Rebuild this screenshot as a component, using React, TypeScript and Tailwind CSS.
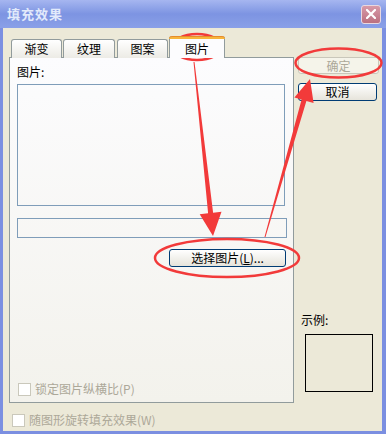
import React from "react";

const tabs = [
  { name: "渐变", w: "w-[51px]", ml: "ml-[2px]" },
  { name: "纹理", w: "w-[52px]", ml: "ml-[1px]" },
  { name: "图案", w: "w-[51px]", ml: "ml-[2px]" },
];

function Checkbox({ label }: { label: React.ReactNode }) {
  return (
    <div className="flex items-center">
      <div className="w-[13px] h-[13px] border border-[#cac8bb] bg-white" />
      <span className="ml-[4px] text-[12px] leading-[14px] text-[#aca899]">{label}</span>
    </div>
  );
}

export default function App() {
  return (
    <div
      className="relative w-[386px] h-[434px] overflow-hidden bg-[#7b8fe1] select-none"
      style={{ fontFamily: '"Noto Sans CJK SC", "Noto Sans", sans-serif' }}
    >
      {/* TITLE BAR */}
      <div className="h-[28px] flex items-center justify-between bg-gradient-to-b from-[#a6b6f0] via-[#7d94e2] to-[#8aa0e8] pl-[7px] pr-[5px]">
        <span className="text-[13px] font-bold text-[#e2eafb] tracking-[1px]">填充效果</span>
        <div className="w-[20px] h-[19px] rounded-[3px] border border-[#e8d8e0] bg-gradient-to-b from-[#d79aa8] to-[#bb7080] flex items-center justify-center">
          <svg width="10" height="10" viewBox="0 0 10 10">
            <path d="M1 1 L9 9 M9 1 L1 9" stroke="white" strokeWidth="2.2" strokeLinecap="square" />
          </svg>
        </div>
      </div>

      {/* BODY */}
      <div className="ml-[3px] mr-[4px] h-[403px] bg-[#ece9d8] flex">
        {/* LEFT COLUMN */}
        <div className="ml-[6px] mt-[9px] w-[285px] flex flex-col">
          {/* TABS */}
          <div className="h-[21px] flex items-end relative z-10 -mb-px">
            {tabs.map((t) => (
              <div
                key={t.name}
                className={`${t.w} ${t.ml} h-[19px] border border-b-0 border-[#919b9c] rounded-t-[3px] bg-gradient-to-b from-white to-[#ecebe5] flex items-center justify-center text-[12px] text-black`}
              >
                {t.name}
              </div>
            ))}
            <div className="w-[56px] ml-[1px] h-[22px] border-x border-[#919b9c] rounded-t-[3px] bg-[#fcfcfe] flex flex-col">
              <div className="h-[3px] -mx-px rounded-t-[3px] bg-[#f7b53c] border-t border-[#e68b2c]" />
              <div className="flex-1 flex items-center justify-center text-[12px] text-black">图片</div>
            </div>
          </div>

          {/* PANEL */}
          <div className="h-[346px] border border-[#919b9c] bg-gradient-to-b from-[#fcfcfe] to-[#f3f2ec] pl-[7px] flex flex-col">
            <div className="mt-[7px] text-[12px] leading-[14px] text-black">图片:</div>
            <div className="mt-[5px] w-[268px] h-[122px] border border-[#7f9db9]" />
            <div className="mt-[12px] w-[270px] h-[20px] border border-[#7f9db9]" />
            <div className="mt-[11px] ml-[152px] w-[117px] h-[18px] rounded-[3px] border border-[#003c74] bg-gradient-to-b from-white to-[#e6e4db] flex items-center justify-center text-[12px] text-black">
              选择图片(<span className="underline">L</span>)...
            </div>
            <div className="mt-auto mb-[6px] ml-px">
              <Checkbox label="锁定图片纵横比(P)" />
            </div>
          </div>

          <div className="mt-[10px] ml-[3px]">
            <Checkbox label="随图形旋转填充效果(W)" />
          </div>
        </div>

        {/* RIGHT COLUMN */}
        <div className="ml-[4px] mt-[29px] flex flex-col">
          <div className="w-[81px] h-[17px] rounded-[3px] border border-[#c9c7ba] bg-[#f5f4ea] flex items-center justify-center text-[12px] text-[#aca899]">
            确定
          </div>
          <div className="mt-[9px] w-[79px] h-[18px] rounded-[3px] border border-[#003c74] bg-gradient-to-b from-white to-[#e6e4db] flex items-center justify-center text-[12px] text-black">
            取消
          </div>
          <div className="mt-[212px] ml-[3px] text-[12px] leading-[14px] text-black">示例:</div>
          <div className="mt-[7px] ml-[7px] w-[68px] h-[58px] border border-black bg-[#ece9d8]" />
        </div>
      </div>

      {/* RED ANNOTATIONS */}
      <svg className="absolute inset-0 pointer-events-none" width="386" height="434" viewBox="0 0 386 434">
        <g fill="none" stroke="#f23a3a" strokeWidth="2.5">
          <ellipse cx="197" cy="47" rx="25" ry="13" />
          <ellipse cx="338.5" cy="63" rx="43" ry="14.5" />
          <ellipse cx="227" cy="258" rx="72" ry="19" />
        </g>
        <g fill="#f23a3a">
          <polygon points="193.5,62 194.5,62 213.1,212.7 221.5,211.8 213,236 199.7,214.2 208.1,213.3" />
          <polygon points="264.5,237 265.5,237 306.4,100.9 313.6,102.9 310,79 294.4,97.5 301.6,99.5" />
        </g>
      </svg>
    </div>
  );
}
